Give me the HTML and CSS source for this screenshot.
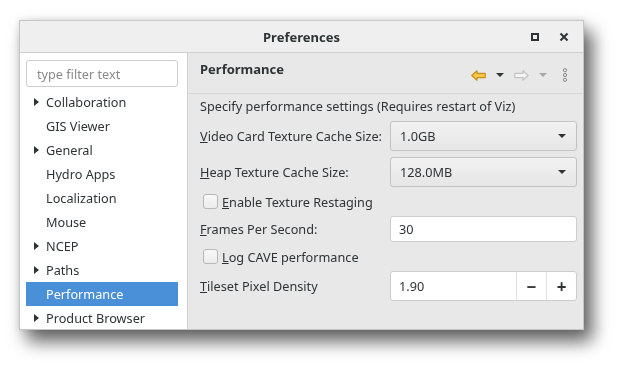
FILE: index.html
```html
<!DOCTYPE html>
<html lang="en">
<head>
  <meta charset="UTF-8" />
  <meta name="viewport" content="width=device-width, initial-scale=1.0"/>
  <title>Preferences</title>
  <link rel="stylesheet" href="styles.css">
</head>
<body>
  <div class="window">
    <div class="titlebar">
      <span class="title">Preferences</span>
      <div class="window-controls">
        <span class="win-btn"><span class="max-icon"></span></span>
        <span class="win-btn">
          <svg width="10" height="10" viewBox="0 0 10 10"><path d="M1.5 1.5 L8.5 8.5 M8.5 1.5 L1.5 8.5" stroke="#2e3436" stroke-width="2"/></svg>
        </span>
      </div>
    </div>

    <div class="content">
      <div class="sidebar">
        <input class="filter" type="text" placeholder="type filter text"/>
        <ul class="tree">
          <li class="has-children">Collaboration</li>
          <li>GIS Viewer</li>
          <li class="has-children">General</li>
          <li>Hydro Apps</li>
          <li>Localization</li>
          <li>Mouse</li>
          <li class="has-children">NCEP</li>
          <li class="has-children">Paths</li>
          <li class="selected">Performance</li>
          <li class="has-children">Product Browser</li>
        </ul>
      </div>

      <div class="main">
        <div class="page-header">
          <h2>Performance</h2>
          <div class="nav-tools">
            <svg width="15" height="11" viewBox="0 0 15 11"><path d="M0.8 5.5 L6 0.8 L6 3.4 L14.2 3.4 L14.2 7.6 L6 7.6 L6 10.2 Z" fill="#f7c948" stroke="#c98d1c" stroke-width="1.2" stroke-linejoin="round"/></svg>
            <span class="drop dark"></span>
            <svg width="15" height="11" viewBox="0 0 15 11"><path d="M14.2 5.5 L9 0.8 L9 3.4 L0.8 3.4 L0.8 7.6 L9 7.6 L9 10.2 Z" fill="#f4f4f4" stroke="#c2c2c2" stroke-width="1.2" stroke-linejoin="round"/></svg>
            <span class="drop light"></span>
            <svg class="menu-dots" width="6" height="14" viewBox="0 0 6 14"><circle cx="3" cy="2.2" r="1.6" fill="none" stroke="#8a8a8a"/><circle cx="3" cy="7" r="1.6" fill="none" stroke="#8a8a8a"/><circle cx="3" cy="11.8" r="1.6" fill="none" stroke="#8a8a8a"/></svg>
          </div>
        </div>

        <div class="page-body">
          <div class="description">Specify performance settings (Requires restart of Viz)</div>

          <label class="field-label"><u>V</u>ideo Card Texture Cache Size:</label>
          <div class="combo"><span>1.0GB</span><span class="drop dark"></span></div>

          <label class="field-label"><u>H</u>eap Texture Cache Size:</label>
          <div class="combo"><span>128.0MB</span><span class="drop dark"></span></div>

          <label class="check-row"><span class="checkbox"></span><span><u>E</u>nable Texture Restaging</span></label>

          <label class="field-label"><u>F</u>rames Per Second:</label>
          <input class="text-field" type="text" value="30"/>

          <label class="check-row"><span class="checkbox"></span><span><u>L</u>og CAVE performance</span></label>

          <label class="field-label"><u>T</u>ileset Pixel Density</label>
          <div class="spin">
            <span class="spin-value">1.90</span>
            <span class="spin-btn">&minus;</span>
            <span class="spin-btn">+</span>
          </div>
        </div>
      </div>
    </div>
  </div>
</body>
</html>
```

FILE: styles.css
```css
* {
  margin: 0;
  padding: 0;
  box-sizing: border-box;
}

html, body {
  height: 100%;
}

body {
  font-family: 'Noto Sans', 'DejaVu Sans', sans-serif;
  font-size: 12.7px;
  color: #2e3436;
  background-color: #ffffff;
  padding: 20px 0 0 19px;
}

.window {
  width: 565px;
  height: 310px;
  display: flex;
  flex-direction: column;
  border: 1px solid #c6c6c6;
  background-color: #e8e8e8;
  filter: drop-shadow(8px 11px 9px rgba(0, 0, 0, 0.6)) drop-shadow(0 0 3px rgba(0, 0, 0, 0.12));
}

.titlebar {
  height: 32px;
  flex-shrink: 0;
  display: flex;
  align-items: center;
  justify-content: center;
  position: relative;
  background-color: #efefef;
  border-bottom: 1px solid #cfcfcf;
}

.title {
  font-weight: bold;
  font-size: 13px;
  color: #2e3436;
}

.window-controls {
  position: absolute;
  right: 9px;
  top: 0;
  height: 31px;
  display: flex;
  align-items: center;
  gap: 9px;
}

.win-btn {
  width: 20px;
  height: 20px;
  display: flex;
  align-items: center;
  justify-content: center;
}

.max-icon {
  width: 8px;
  height: 8px;
  border: 2px solid #2e3436;
}

.content {
  flex: 1;
  display: flex;
  min-height: 0;
}

.sidebar {
  width: 168px;
  background-color: #ffffff;
  border-right: 1px solid #d3d3d3;
  padding: 7px 9px 0 6px;
  overflow: hidden;
}

.filter {
  width: 152px;
  height: 27px;
  border: 1px solid #cdcdcd;
  border-radius: 3px;
  padding: 0 10px;
  font-family: inherit;
  font-size: 12.7px;
  color: #2e3436;
  outline: none;
}

.filter::placeholder {
  color: #8a8a8a;
}

.tree {
  list-style: none;
  margin-top: 3px;
  width: 152px;
}

.tree li {
  height: 24px;
  line-height: 24px;
  padding-left: 20px;
  position: relative;
  white-space: nowrap;
}

.tree li.has-children::before {
  content: "";
  position: absolute;
  left: 8px;
  top: 8px;
  border-left: 5px solid #2e3436;
  border-top: 4px solid transparent;
  border-bottom: 4px solid transparent;
}

.tree li.selected {
  background-color: #4a90d9;
  color: #ffffff;
}

.main {
  flex: 1;
  display: flex;
  flex-direction: column;
}

.page-header {
  height: 41px;
  border-bottom: 1px solid #d6d6d6;
  display: flex;
  align-items: flex-start;
  justify-content: space-between;
  padding: 7px 15px 0 12px;
}

.page-header h2 {
  font-size: 13px;
  font-weight: bold;
}

.nav-tools {
  display: flex;
  align-items: center;
  gap: 10px;
  padding-top: 8px;
}

.menu-dots {
  margin-left: 5px;
}

.drop {
  width: 0;
  height: 0;
  border-left: 4px solid transparent;
  border-right: 4px solid transparent;
  border-top: 4px solid #2e3436;
}

.drop.light {
  border-top-color: #a8a8a8;
}

.page-body {
  display: grid;
  grid-template-columns: 190px 187px;
  row-gap: 6px;
  align-items: center;
  padding: 3px 0 0 12px;
}

.description {
  grid-column: 1 / 3;
  height: 18px;
  line-height: 18px;
}

.field-label {
  white-space: nowrap;
}

.combo {
  height: 30px;
  display: flex;
  align-items: center;
  justify-content: space-between;
  padding: 0 10px 0 9px;
  border: 1px solid #c3c3c3;
  border-radius: 3px;
  background: linear-gradient(#f2f2f2, #e6e6e6);
}

.check-row {
  grid-column: 1 / 3;
  height: 17px;
  display: flex;
  align-items: center;
  gap: 4px;
  padding-left: 3px;
}

.checkbox {
  width: 15px;
  height: 15px;
  border: 1px solid #b8b8b8;
  border-radius: 3px;
  background: linear-gradient(#f8f8f8, #ececec);
}

.text-field {
  height: 26px;
  border: 1px solid #cdcdcd;
  border-radius: 3px;
  padding: 0 8px;
  font-family: inherit;
  font-size: 12.7px;
  color: #2e3436;
  outline: none;
}

.spin {
  height: 30px;
  display: flex;
  border: 1px solid #cdcdcd;
  border-radius: 3px;
  background-color: #ffffff;
}

.spin-value {
  flex: 1;
  display: flex;
  align-items: center;
  padding-left: 8px;
}

.spin-btn {
  width: 30px;
  display: flex;
  align-items: center;
  justify-content: center;
  border-left: 1px solid #e2e2e2;
  font-size: 17px;
  font-weight: bold;
}
```
